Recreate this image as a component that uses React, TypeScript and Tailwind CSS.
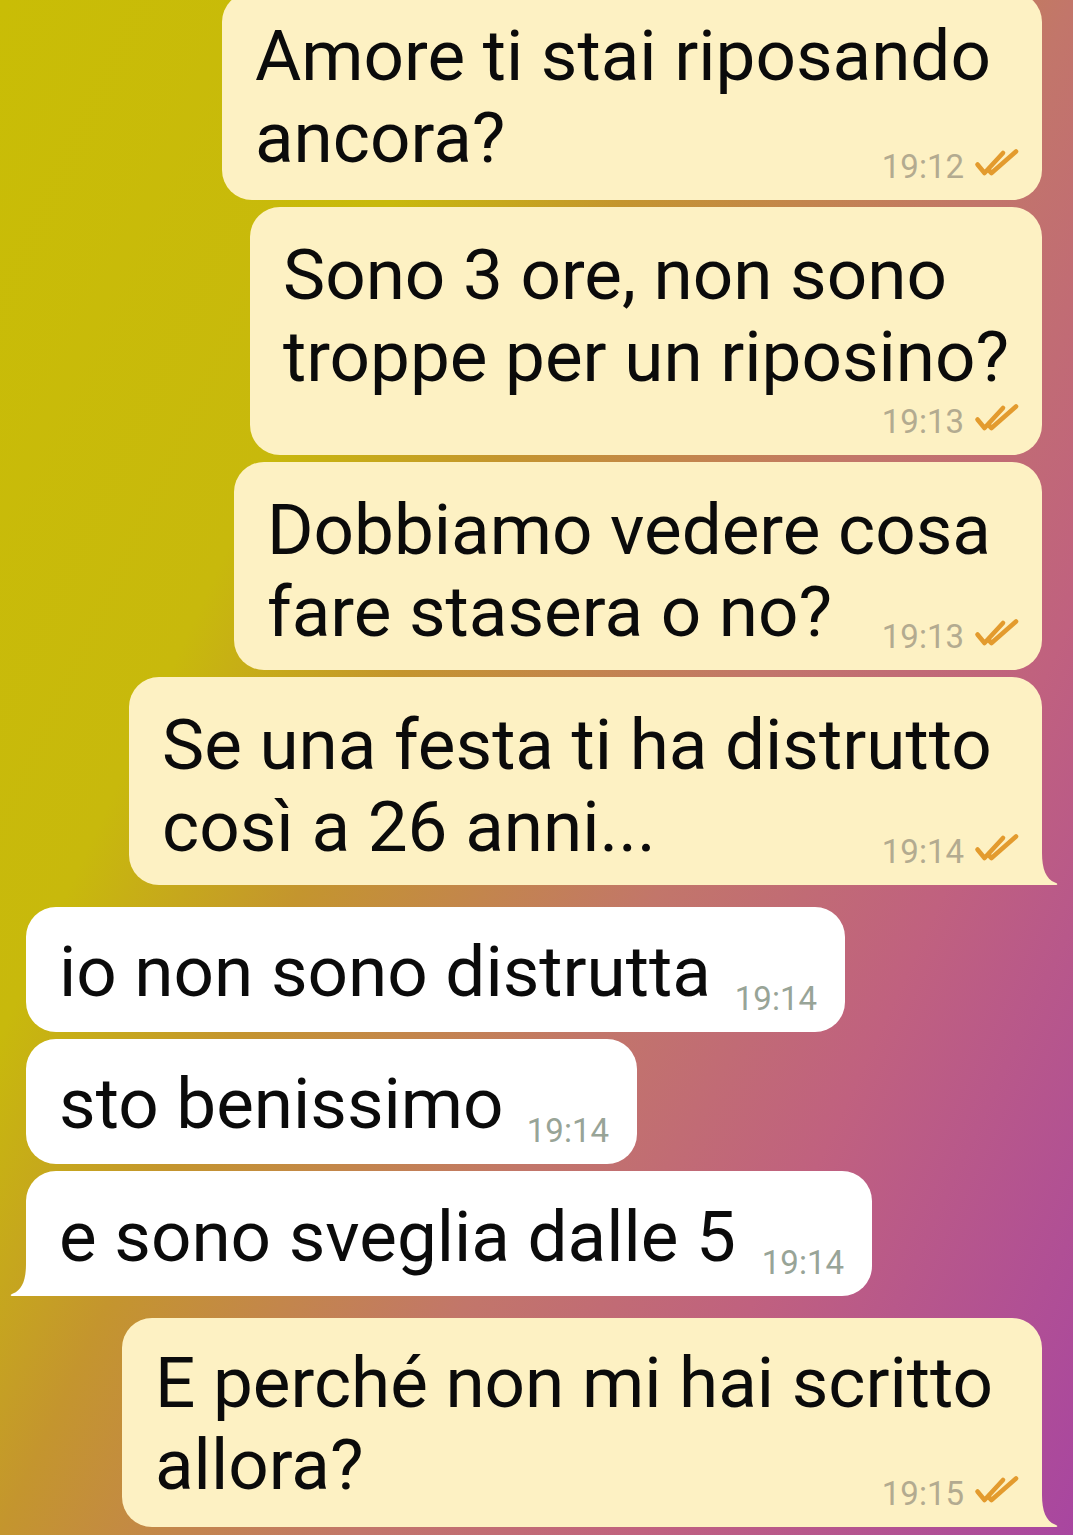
import React from "react";

type Msg = {
  lines: string[];
  time: string;
  out: boolean;
  width: number;
  pt: number;
  extra: number;
  tail?: boolean;
  tsOwnRow?: boolean;
};

const Checks = () => (
  <svg width="48" height="30" viewBox="0 0 48 30" className="mb-[5px] ml-[10px] shrink-0">
    <path d="M3.5 16.5 L10.5 25 L29 5" fill="none" stroke="#e39b2e" strokeWidth="4.6" strokeLinecap="round" strokeLinejoin="round" />
    <path d="M15 22.5 L17.5 25 L42 3.5" fill="none" stroke="#e39b2e" strokeWidth="4.6" strokeLinecap="round" strokeLinejoin="round" />
  </svg>
);

const TailRight = ({ color }: { color: string }) => (
  <svg width="16" height="32" viewBox="0 0 16 32" className="absolute bottom-0 left-full">
    <path d="M0 0 C0 16 4 26 13 29.5 C16 30.6 16 32 13.5 32 L0 32 Z" fill={color} />
  </svg>
);

const TailLeft = ({ color }: { color: string }) => (
  <svg width="16" height="32" viewBox="0 0 16 32" className="absolute bottom-0 right-full">
    <path d="M16 0 C16 16 12 26 3 29.5 C0 30.6 0 32 2.5 32 L16 32 Z" fill={color} />
  </svg>
);

function Stamp({ time, out }: { time: string; out: boolean }) {
  return (
    <div className="flex items-end shrink-0">
      <span
        className={
          "text-[33px] leading-none whitespace-nowrap " +
          (out ? "text-[#b3ab90]" : "text-[#98a497]")
        }
      >
        {time}
      </span>
      {out && <Checks />}
    </div>
  );
}

function Bubble({ m }: { m: Msg }) {
  const bg = m.out ? "#fdf1c3" : "#ffffff";
  const last = m.lines[m.lines.length - 1];
  const first = m.lines.slice(0, -1);
  return (
    <div
      className={
        "relative flex flex-col pb-[17px] " +
        (m.out ? "bg-[#fdf1c3] pl-[33px] pr-[20px] " : "bg-white pl-[33px] pr-[28px] ") +
        (m.tail
          ? m.out
            ? "rounded-tl-[30px] rounded-tr-[30px] rounded-bl-[30px]"
            : "rounded-tl-[30px] rounded-tr-[30px] rounded-br-[30px]"
          : "rounded-[30px]")
      }
      style={{ width: m.width, paddingTop: m.pt }}
    >
      {first.map((l, i) => (
        <div key={i} className="text-[71px] leading-[82px] whitespace-nowrap text-[#0b0b0b]">
          {l}
        </div>
      ))}
      {m.tsOwnRow ? (
        <>
          <div className="text-[71px] leading-[82px] whitespace-nowrap text-[#0b0b0b]">{last}</div>
          <div className="flex justify-end mt-[5px]">
            <Stamp time={m.time} out={m.out} />
          </div>
        </>
      ) : (
        <div className="flex items-end justify-between">
          <div
            className="text-[71px] leading-[82px] whitespace-nowrap text-[#0b0b0b]"
            style={{ paddingBottom: m.extra }}
          >
            {last}
          </div>
          <Stamp time={m.time} out={m.out} />
        </div>
      )}
      {m.tail && (m.out ? <TailRight color={bg} /> : <TailLeft color={bg} />)}
    </div>
  );
}

const group1: Msg[] = [
  { lines: ["Amore ti stai riposando", "ancora?"], time: "19:12", out: true, width: 820, pt: 23, extra: 4 },
  { lines: ["Sono 3 ore, non sono", "troppe per un riposino?"], time: "19:13", out: true, width: 792, pt: 27, extra: 0, tsOwnRow: true },
  { lines: ["Dobbiamo vedere cosa", "fare stasera o no?"], time: "19:13", out: true, width: 808, pt: 27, extra: 0 },
  { lines: ["Se una festa ti ha distrutto", "così a 26 anni..."], time: "19:14", out: true, width: 913, pt: 27, extra: 0, tail: true },
];

const group2: Msg[] = [
  { lines: ["io non sono distrutta"], time: "19:14", out: false, width: 819, pt: 24, extra: 2 },
  { lines: ["sto benissimo"], time: "19:14", out: false, width: 611, pt: 24, extra: 2 },
  { lines: ["e sono sveglia dalle 5"], time: "19:14", out: false, width: 846, pt: 25, extra: 1, tail: true },
];

const group3: Msg[] = [
  { lines: ["E perché non mi hai scritto", "allora?"], time: "19:15", out: true, width: 920, pt: 24, extra: 4, tail: true },
];

export default function App() {
  return (
    <div
      className="w-[1073px] h-[1535px] overflow-hidden bg-[linear-gradient(115deg,#c9bd06_0%,#c8b90c_27%,#c4952e_40%,#c2766a_60%,#c0617f_76%,#a846a0_100%)]"
      style={{ fontFamily: "Roboto, 'Noto Sans', sans-serif" }}
    >
      <div className="flex flex-col gap-[22px] mt-[-8px]">
        <div className="flex flex-col items-end gap-[7px] pr-[31px]">
          {group1.map((m, i) => (
            <Bubble key={i} m={m} />
          ))}
        </div>
        <div className="flex flex-col items-start gap-[7px] pl-[26px]">
          {group2.map((m, i) => (
            <Bubble key={i} m={m} />
          ))}
        </div>
        <div className="flex flex-col items-end gap-[7px] pr-[31px]">
          {group3.map((m, i) => (
            <Bubble key={i} m={m} />
          ))}
        </div>
      </div>
    </div>
  );
}
